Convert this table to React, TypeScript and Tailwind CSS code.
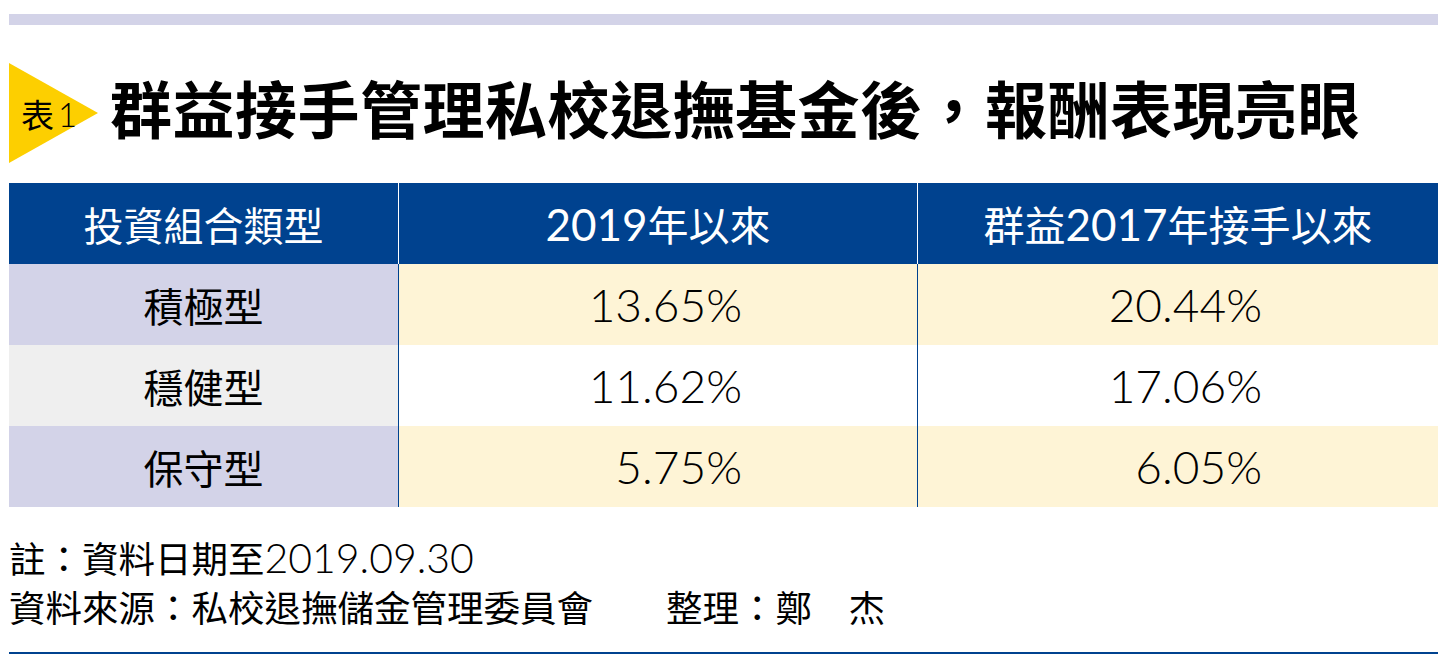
const cjk = "font-['Noto_Sans_CJK_TC',sans-serif]";
const num = "font-['Lato','Noto_Sans_CJK_TC',sans-serif]";

const rows = [
  { name: "積極型", a: "13.65%", b: "20.44%", first: "bg-[#d3d3e8]", rest: "bg-[#fef4d6]" },
  { name: "穩健型", a: "11.62%", b: "17.06%", first: "bg-[#efefef]", rest: "bg-white" },
  { name: "保守型", a: "5.75%", b: "6.05%", first: "bg-[#d3d3e8]", rest: "bg-[#fef4d6]" },
];

function Marker() {
  return (
    <div className="relative h-[100px] w-[89px] shrink-0">
      <svg className="absolute inset-0" width="89" height="100" viewBox="0 0 89 100">
        <polygon points="0,0 89,50 0,100" fill="#fdcf00" />
      </svg>
      <div className={`relative flex h-full items-center pl-[12px] pt-[2px] text-[33px] leading-none text-black ${cjk}`}>
        表<span className={`ml-[4px] font-light ${num}`}>1</span>
      </div>
    </div>
  );
}

export default function App() {
  return (
    <div className="h-[668px] w-[1450px] bg-white px-[9px] pt-[14px] pr-[12px]">
      <div className="h-[11px] bg-[#d3d3e8]" />

      <div className="mt-[38px] flex h-[100px] items-center">
        <Marker />
        <h1 className={`ml-[12px] pb-[12px] text-[62px] font-bold leading-none tracking-[0.5px] text-black ${cjk}`}>
          群益接手管理私校退撫基金後，報酬表現亮眼
        </h1>
      </div>

      <div className="mt-[20px] grid grid-cols-[390px_519px_1fr]">
        <div className={`flex h-[81px] items-center justify-center border-r border-white bg-[#00428f] text-[40px] font-normal text-white ${cjk}`}>
          投資組合類型
        </div>
        <div className={`flex h-[81px] items-center justify-center border-r border-white bg-[#00428f] text-[41px] font-normal text-white ${cjk}`}>
          <span className={`text-[44px] font-normal ${num}`}>2019</span>年以來
        </div>
        <div className={`flex h-[81px] items-center justify-center bg-[#00428f] text-[41px] font-normal text-white ${cjk}`}>
          群益<span className={`text-[44px] font-normal ${num}`}>2017</span>年接手以來
        </div>

        {rows.map((r) => (
          <div key={r.name} className="contents">
            <div className={`flex h-[81px] items-center justify-center border-r border-[#00428f] text-[40px] text-black ${r.first} ${cjk}`}>
              {r.name}
            </div>
            <div className={`flex h-[81px] items-center justify-center border-r border-[#00428f] pl-[14px] ${r.rest}`}>
              <span className={`w-[154px] text-right text-[46px] font-light leading-none text-black ${num}`}>{r.a}</span>
            </div>
            <div className={`flex h-[81px] items-center justify-center pl-[14px] ${r.rest}`}>
              <span className={`w-[154px] text-right text-[46px] font-light leading-none text-black ${num}`}>{r.b}</span>
            </div>
          </div>
        ))}
      </div>

      <div className={`mt-[26px] text-[36.5px] leading-[49px] text-black ${cjk}`}>
        <p>
          註：資料日期至<span className={`text-[41px] font-light leading-none ${num}`}>2019.09.30</span>
        </p>
        <p className="whitespace-pre">資料來源：私校退撫儲金管理委員會　　整理：鄭　杰</p>
      </div>

      <div className="mt-[21px] h-[2px] bg-[#00428f]" />
    </div>
  );
}
